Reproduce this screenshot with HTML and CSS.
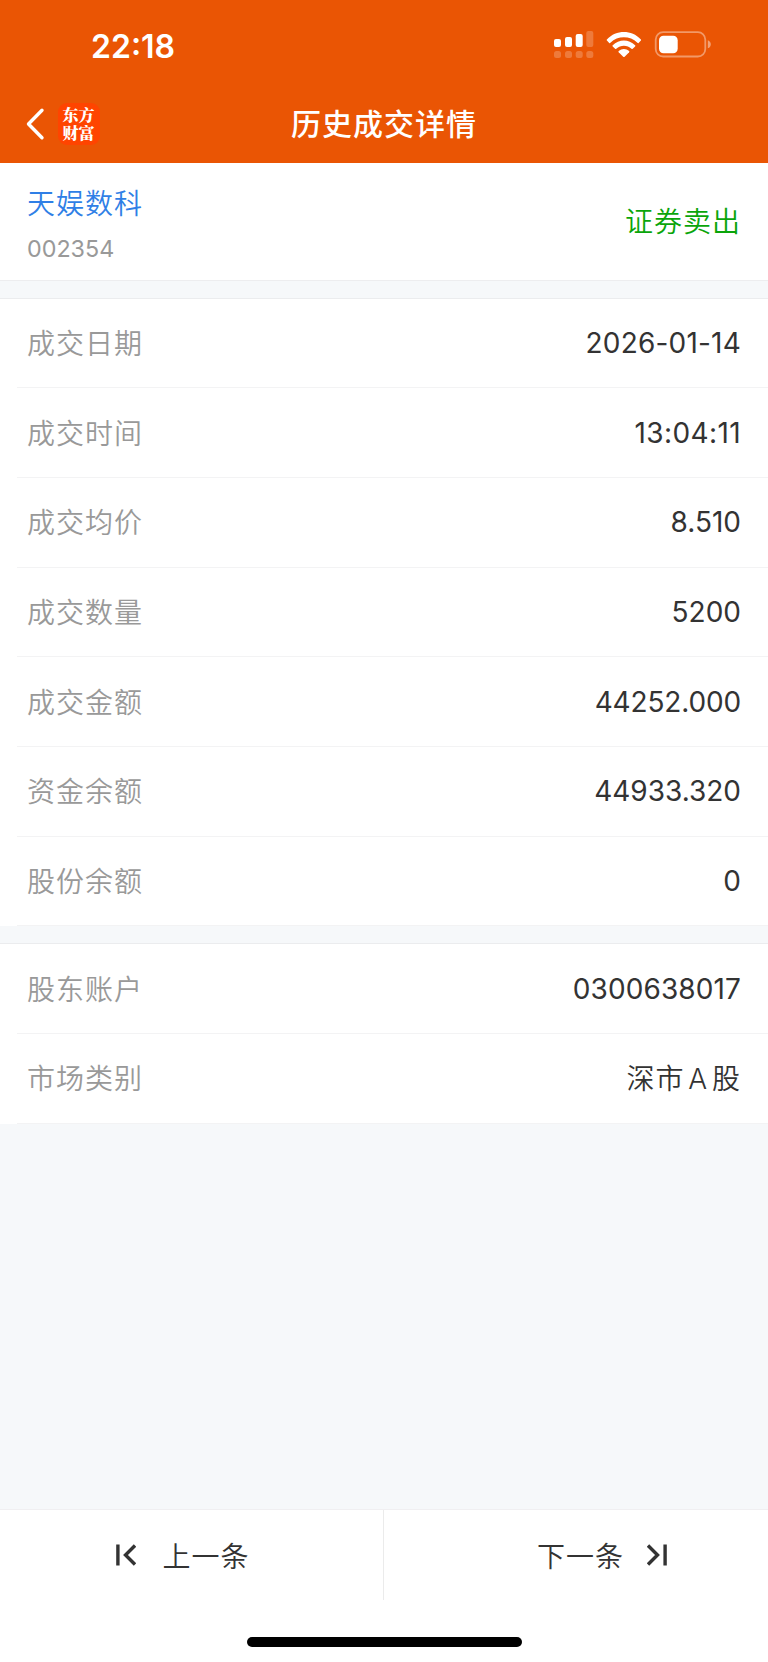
FILE: index.html
```html
<!DOCTYPE html>
<html lang="zh-CN">
<head>
<meta charset="utf-8">
<title>历史成交详情</title>
<link rel="stylesheet" href="styles.css">
</head>
<body>
<div class="screen">
  <header class="header">
    <div class="status">
      <span class="clock">22:18</span>
      <svg class="status-icons" width="160" height="30" viewBox="0 0 160 30" fill="#fff">
        <rect x="1" y="8" width="7" height="8" rx="2"/>
        <rect x="12" y="6" width="7" height="10" rx="2"/>
        <rect x="22.700" y="3" width="7" height="13" rx="2"/>
        <g opacity=".22">
          <rect x="33.300" y="0" width="7" height="16" rx="2"/>
          <rect x="1" y="20" width="7" height="7" rx="2.500"/>
          <rect x="12" y="20" width="7" height="7" rx="2.500"/>
          <rect x="22.700" y="20" width="7" height="7" rx="2.500"/>
          <rect x="33.300" y="20" width="7" height="7" rx="2.500"/>
        </g>
        <path d="M53.900 8.400C63.300-1.400 78.500-1.400 87.900 8.400Q88.400 9 87.900 9.600L85.600 11.900Q85 12.400 84.400 11.800C77 4.500 64.800 4.500 57.400 11.800Q56.800 12.400 56.200 11.900L53.900 9.600Q53.400 9 53.900 8.400Z"/>
        <path d="M59.700 14.200C66 7.800 75.800 7.800 82.100 14.200Q82.700 14.800 82.100 15.400L79.700 17.700Q79.100 18.200 78.500 17.700C74.200 13.700 67.600 13.700 63.300 17.700Q62.700 18.200 62.100 17.700L59.700 15.400Q59.100 14.800 59.700 14.200Z"/>
        <path d="M65.700 20.100C68.700 17.400 73.100 17.400 76.100 20.100Q76.700 20.700 76.100 21.300L71.600 25.700Q70.900 26.300 70.200 25.700L65.700 21.300Q65.100 20.700 65.700 20.100Z"/>
        <rect x="102.700" y="1.200" width="49.600" height="24.300" rx="7.500" fill="none" stroke="#fff" stroke-opacity=".4" stroke-width="1.800"/>
        <path d="M154.800 9.200C158.800 10.500 158.800 16 154.800 17.300Z" fill-opacity=".45"/>
        <rect x="106" y="4.700" width="18.700" height="17.500" rx="4.500"/>
      </svg>
    </div>
    <div class="nav">
      <svg class="back" width="20" height="34" viewBox="0 0 20 34" fill="none" stroke="#fff" stroke-width="3.400" stroke-linecap="round" stroke-linejoin="round"><path d="M17 3.200 3.500 17 17 30.800"/></svg>
      <div class="logo">东方<br>财富</div>
      <h1 class="title">历史成交详情</h1>
    </div>
  </header>

  <section class="stock">
    <div class="stock-id">
      <span class="stock-name">天娱数科</span>
      <span class="stock-code">002354</span>
    </div>
    <span class="side">证券卖出</span>
  </section>

  <section class="group">
    <div class="row"><span class="label">成交日期</span><span class="value date">2026-01-14</span></div>
    <div class="row"><span class="label">成交时间</span><span class="value time">13:04:11</span></div>
    <div class="row"><span class="label">成交均价</span><span class="value">8.510</span></div>
    <div class="row"><span class="label">成交数量</span><span class="value">5200</span></div>
    <div class="row"><span class="label">成交金额</span><span class="value amount">44252.000</span></div>
    <div class="row"><span class="label">资金余额</span><span class="value">44933.320</span></div>
    <div class="row"><span class="label">股份余额</span><span class="value">0</span></div>
  </section>

  <section class="group">
    <div class="row"><span class="label">股东账户</span><span class="value account">0300638017</span></div>
    <div class="row"><span class="label">市场类别</span><span class="value market">深市 A 股</span></div>
  </section>

  <footer class="footer">
    <div class="pager">
      <div class="page prev">
        <svg width="20" height="22" viewBox="0 0 20 22" fill="none" stroke="#333" stroke-width="3.400"><path d="M1.900.5v21M19 1.500 9.500 11 19 20.500"/></svg>
        <span>上一条</span>
      </div>
      <div class="page next">
        <span>下一条</span>
        <svg width="20" height="22" viewBox="0 0 20 22" fill="none" stroke="#333" stroke-width="3.400"><path d="M18.100.5v21M1 1.500 10.500 11 1 20.500"/></svg>
      </div>
    </div>
    <div class="home"></div>
  </footer>
</div>
</body>
</html>
```
FILE: styles.css
```css
* { box-sizing: border-box; }

body {
  margin: 0;
  background: #f6f8fa;
  color: #333;
  font-family: Inter, "Noto Sans CJK SC", sans-serif;
  font-size: 28px;
  font-weight: 350;
}

.screen {
  width: 768px;
  height: 1662px;
  display: flex;
  flex-direction: column;
}

.header {
  height: 163px;
  background: #ea5504;
  color: #fff;
}

.status {
  height: 86px;
  padding: 6px 51.500px 0 91px;
  display: flex;
  align-items: center;
  justify-content: space-between;
}

.clock {
  padding-top: 2px;
  font-size: 32px;
  font-weight: 600;
  line-height: 40px;
}

.status-icons { margin: 0 4px 0 0; }

.nav {
  height: 76px;
  padding-left: 25px;
  display: grid;
  grid-template-columns: 20px 42px 1fr;
  column-gap: 12.500px;
  align-items: center;
}

.logo {
  width: 42px;
  height: 42px;
  padding-top: 3px;
  border-radius: 9px;
  background: #ff4400;
  text-align: center;
  font: 900 16px/18px "Noto Serif CJK SC", "Noto Sans CJK SC", serif;
}

.title {
  margin: 0;
  padding-right: 112px;
  text-align: center;
  font-size: 30px;
  font-weight: 500;
  letter-spacing: 1px;
  line-height: 44px;
}

.stock {
  height: 117.500px;
  padding: 0 27px;
  background: #fff;
  border-bottom: 1px solid #ededef;
  display: flex;
  align-items: center;
  justify-content: space-between;
}

.stock-id {
  padding-top: 10px;
  display: flex;
  flex-direction: column;
}

.stock-name {
  color: #2f7fe6;
  letter-spacing: 1px;
  line-height: 44px;
}

.stock-code {
  color: #999;
  font-size: 23.300px;
  font-weight: 400;
  line-height: 45px;
}

.side {
  padding-bottom: 3px;
  color: #0aa50a;
  letter-spacing: 1px;
}

.group {
  margin-top: 17px;
  padding-left: 17px;
  background: #fff;
  border-top: 1px solid #ebecee;
}

.row {
  height: 89.700px;
  padding: 0 27px 0 10px;
  border-bottom: 1px solid #f3f3f4;
  display: flex;
  align-items: center;
  justify-content: space-between;
}

.label {
  padding-bottom: 2px;
  color: #999;
  letter-spacing: 1px;
}

.value { font-weight: 400; }

.date { letter-spacing: 0.200px; }

.time { letter-spacing: 0.400px; }

.amount { letter-spacing: -0.150px; }

.account { letter-spacing: 0.100px; }

.market {
  padding-bottom: 2px;
  font-weight: 350;
  letter-spacing: 1px;
  word-spacing: -5px;
}

.footer {
  height: 153px;
  margin-top: auto;
  background: #fff;
  border-top: 1px solid #f0eff1;
}

.pager {
  height: 90px;
  display: grid;
  grid-template-columns: 384px 384px;
}

.page {
  display: flex;
  align-items: center;
  gap: 27px;
  letter-spacing: 1px;
}

.page span { padding-bottom: 1px; }

.prev {
  padding-left: 115.500px;
  border-right: 1px solid #ebebeb;
}

.next {
  justify-content: flex-end;
  gap: 23px;
  padding-right: 101px;
}

.home {
  width: 275px;
  height: 10px;
  margin: 37px auto 0;
  border-radius: 5px;
  background: #000;
}
```
